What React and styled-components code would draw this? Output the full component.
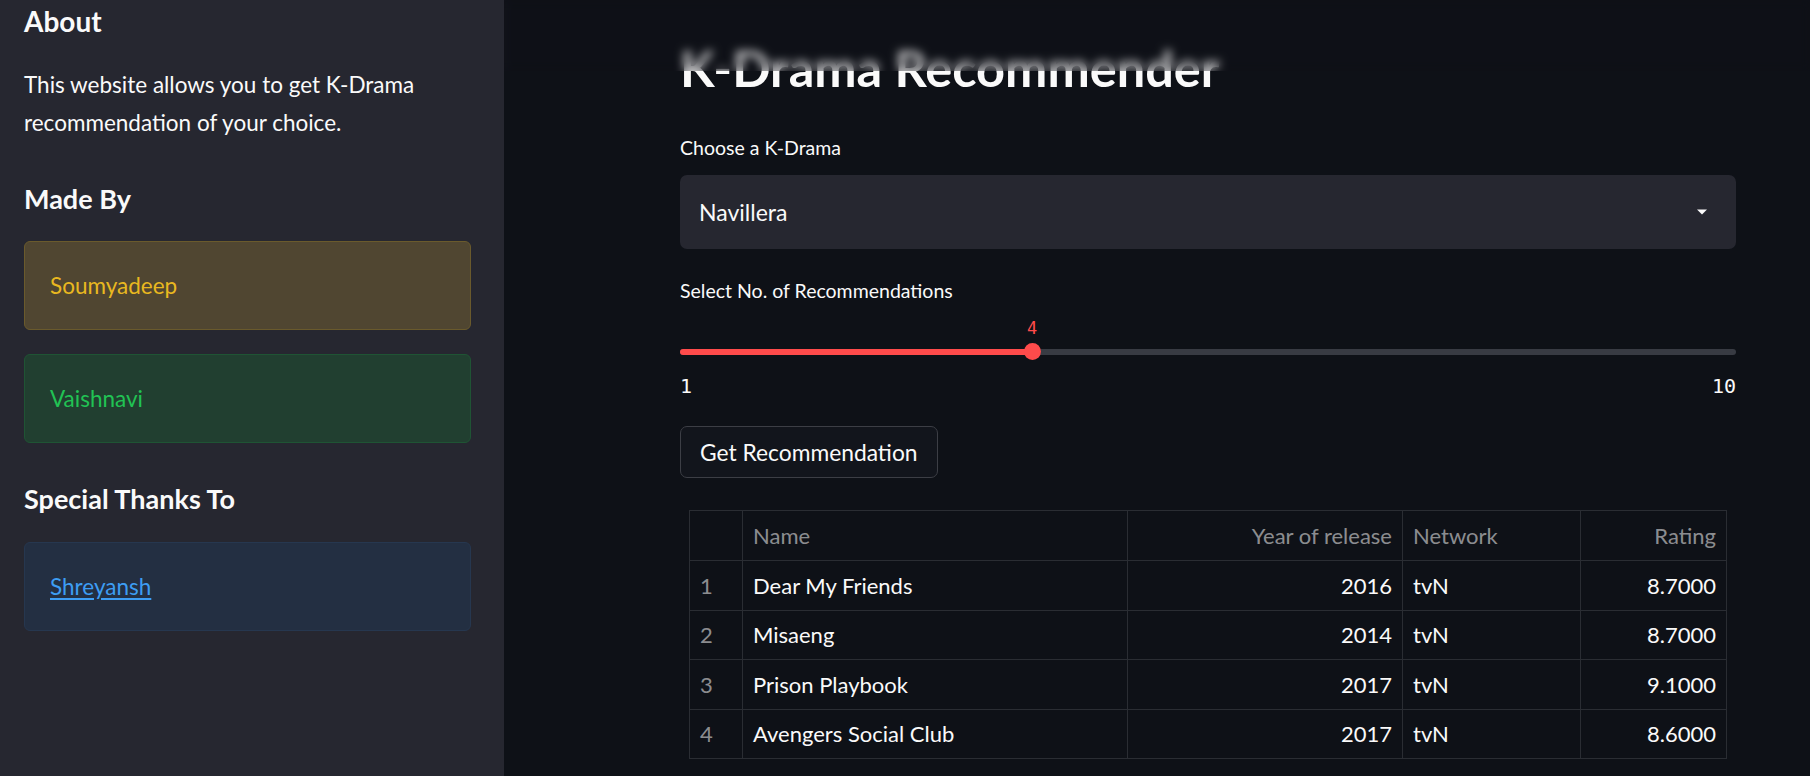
import styled, { createGlobalStyle } from "styled-components";

const GlobalStyle = createGlobalStyle`
  html, body {
    margin: 0;
    padding: 0;
    background: #0e1117;
    font-family: Lato, "Noto Sans", sans-serif;
    color: #fafafa;
  }
  * { box-sizing: border-box; }
`;

const Page = styled.div`
  display: flex;
  height: 776px;
  overflow: hidden;
  position: relative;
`;

const Sidebar = styled.aside`
  width: 504px;
  flex-shrink: 0;
  background: #262730;
  padding: 5px 33px 0 24px;
  display: flex;
  flex-direction: column;
`;

const SideHeading = styled.h2`
  margin: ${(p) => p.$top || 0}px 0 0;
  font-size: ${(p) => p.$size || 27}px;
  line-height: 33.6px;
  font-weight: 700;
  color: #fafafa;
`;

const SideText = styled.p`
  margin: 27px 0 0;
  font-size: 22.5px;
  line-height: 38px;
  color: #fafafa;
`;

const tones = {
  warning: { bg: "#504631", border: "#6a5a2c", color: "#e9b820" },
  success: { bg: "#213f30", border: "#1f5434", color: "#21c354" },
  info: { bg: "#232f42", border: "#26374f", color: "#3d9df3" },
};

const Alert = styled.div`
  margin-top: ${(p) => p.$top}px;
  height: 89px;
  padding: 25px 25px 0;
  border-radius: 6px;
  border: 1px solid ${(p) => tones[p.$tone].border};
  background: ${(p) => tones[p.$tone].bg};
  color: ${(p) => tones[p.$tone].color};
  font-size: 22.5px;
  line-height: 38px;
`;

const AlertLink = styled.a`
  color: #3d9df3;
  text-decoration: underline;
  text-underline-offset: 3px;
`;

const Main = styled.main`
  flex: 1;
  padding-left: 176px;
`;

const Header = styled.header`
  position: absolute;
  top: 0;
  left: 504px;
  right: 0;
  height: 71px;
  background: rgba(14, 17, 23, 0.25);
  backdrop-filter: blur(5px);
  z-index: 5;
`;

const Content = styled.div`
  width: 1056px;
  display: flex;
  flex-direction: column;
  align-items: flex-start;
`;

const Title = styled.h1`
  margin: 40px 0 0;
  font-size: 50.5px;
  line-height: 56px;
  font-weight: 700;
  color: #fafafa;
`;

const Label = styled.label`
  margin-top: ${(p) => p.$top}px;
  font-size: 19.5px;
  line-height: 22px;
  color: #fafafa;
`;

const Select = styled.div`
  margin-top: 16px;
  width: 100%;
  height: 74px;
  background: #262730;
  border-radius: 7px;
  display: flex;
  align-items: center;
  justify-content: space-between;
  padding: 0 29px 0 19px;
  font-size: 23px;
  color: #fafafa;
`;

const SliderWrap = styled.div`
  width: 100%;
  margin-top: 41px;
`;

const TrackBox = styled.div`
  position: relative;
  height: 17px;
  display: flex;
  align-items: center;
`;

const Track = styled.div`
  width: 100%;
  height: 6px;
  border-radius: 3px;
  background: #383b43;
  display: flex;
`;

const Fill = styled.div`
  height: 100%;
  border-radius: 3px;
  background: #ff4b4b;
`;

const Thumb = styled.div`
  position: absolute;
  top: 0;
  width: 17px;
  height: 17px;
  margin-left: -8.5px;
  border-radius: 50%;
  background: #ff4b4b;
`;

const ThumbValue = styled.span`
  position: absolute;
  bottom: calc(100% + 5px);
  left: 50%;
  transform: translateX(-50%);
  font-family: "DejaVu Sans Mono", "Liberation Mono", monospace;
  font-size: 17px;
  line-height: 20px;
  color: #ff4b4b;
`;

const Ticks = styled.div`
  margin-top: 15px;
  display: flex;
  justify-content: space-between;
  font-family: "DejaVu Sans Mono", "Liberation Mono", monospace;
  font-size: 20px;
  line-height: 22px;
  color: #fafafa;
`;

const Button = styled.button`
  margin-top: 29px;
  height: 52px;
  padding: 0 19px;
  border: 1px solid #3c3e45;
  border-radius: 7px;
  background: #12151c;
  color: #fafafa;
  font-family: Lato, "Noto Sans", sans-serif;
  font-size: 22.8px;
`;

const Table = styled.table`
  margin: 32px 0 0 9px;
  width: 1037px;
  border-collapse: collapse;
  table-layout: fixed;
  font-size: 22px;
  border: 1px solid #2a2d33;
`;

const Th = styled.th`
  height: 50px;
  padding: 0 10px;
  font-weight: 400;
  color: rgba(250, 250, 250, 0.55);
  text-align: ${(p) => (p.$right ? "right" : "left")};
  border: 1px solid #2a2d33;
`;

const Td = styled.td`
  height: 49.5px;
  padding: 0 10px;
  color: ${(p) => (p.$index ? "rgba(250, 250, 250, 0.55)" : "#fafafa")};
  text-align: ${(p) => (p.$right ? "right" : "left")};
  border: 1px solid #2a2d33;
`;

const Caret = () => (
  <svg width="10" height="6" viewBox="0 0 10 6">
    <path d="M0 0.5 L10 0.5 L5 5.5 Z" fill="#fafafa" />
  </svg>
);

const rows = [
  ["Dear My Friends", 2016, "tvN", "8.7000"],
  ["Misaeng", 2014, "tvN", "8.7000"],
  ["Prison Playbook", 2017, "tvN", "9.1000"],
  ["Avengers Social Club", 2017, "tvN", "8.6000"],
];

const min = 1;
const max = 10;
const value = 4;
const thumbPos = ((value - min) / (max - min)) * 100;

export default function App() {
  return (
    <Page>
      <GlobalStyle />
      <Sidebar>
        <SideHeading $size={28}>About</SideHeading>
        <SideText>
          This website allows you to get K-Drama recommendation of your choice.
        </SideText>
        <SideHeading $top={40}>Made By</SideHeading>
        <Alert $tone="warning" $top={26}>Soumyadeep</Alert>
        <Alert $tone="success" $top={24}>Vaishnavi</Alert>
        <SideHeading $top={39}>Special Thanks To</SideHeading>
        <Alert $tone="info" $top={26}>
          <AlertLink href="#">Shreyansh</AlertLink>
        </Alert>
      </Sidebar>
      <Header />
      <Main>
        <Content>
          <Title>K-Drama Recommender</Title>
          <Label $top={41}>Choose a K-Drama</Label>
          <Select>
            <span>Navillera</span>
            <Caret />
          </Select>
          <Label $top={31}>Select No. of Recommendations</Label>
          <SliderWrap>
            <TrackBox>
              <Track>
                <Fill style={{ width: `${thumbPos}%` }} />
              </Track>
              <Thumb style={{ left: `${thumbPos}%` }}>
                <ThumbValue>{value}</ThumbValue>
              </Thumb>
            </TrackBox>
            <Ticks>
              <span>{min}</span>
              <span>{max}</span>
            </Ticks>
          </SliderWrap>
          <Button>Get Recommendation</Button>
          <Table>
            <colgroup>
              <col style={{ width: 53 }} />
              <col style={{ width: 385 }} />
              <col style={{ width: 275 }} />
              <col style={{ width: 178 }} />
              <col style={{ width: 146 }} />
            </colgroup>
            <thead>
              <tr>
                <Th />
                <Th>Name</Th>
                <Th $right>Year of release</Th>
                <Th>Network</Th>
                <Th $right>Rating</Th>
              </tr>
            </thead>
            <tbody>
              {rows.map((r, i) => (
                <tr key={r[0]}>
                  <Td $index>{i + 1}</Td>
                  <Td>{r[0]}</Td>
                  <Td $right>{r[1]}</Td>
                  <Td>{r[2]}</Td>
                  <Td $right>{r[3]}</Td>
                </tr>
              ))}
            </tbody>
          </Table>
        </Content>
      </Main>
    </Page>
  );
}
